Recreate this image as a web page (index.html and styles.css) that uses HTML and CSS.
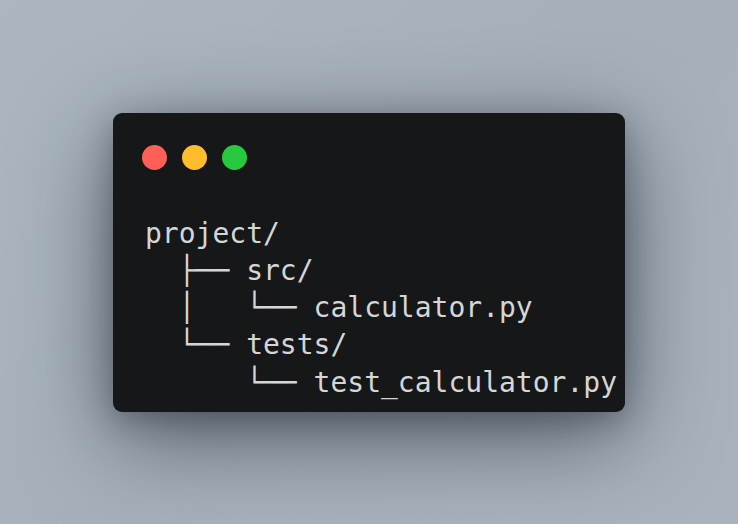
FILE: index.html
```html
<!DOCTYPE html>
<html lang="en">
<head>
<meta charset="utf-8">
<title>Project tree</title>
<link rel="stylesheet" href="styles.css">
</head>
<body>
<main class="stage">
  <section class="window">
    <div class="dots">
      <span class="dot dot-red"></span>
      <span class="dot dot-yellow"></span>
      <span class="dot dot-green"></span>
    </div>
<pre class="tree">project/
  ├── src/
  │   └── calculator.py
  └── tests/
      └── test_calculator.py</pre>
  </section>
</main>
</body>
</html>
```
FILE: styles.css
```css
html, body {
  margin: 0;
  padding: 0;
}
body {
  background: linear-gradient(135deg, #abb6c1 0%, #a6b0bb 50%, #a9b3be 100%);
  min-height: 100vh;
}
.stage {
  width: 738px;
  height: 524px;
  display: flex;
  align-items: center;
  justify-content: center;
}
.window {
  width: 512px;
  height: 299px;
  box-sizing: border-box;
  padding: 32px 0 0 29px;
  background: #151719;
  border-radius: 9px;
  box-shadow: 0 24px 90px rgba(25, 33, 43, 0.6), 0 8px 30px rgba(25, 33, 43, 0.3);
}
.dots {
  display: flex;
  gap: 15px;
  height: 25px;
}
.dot {
  width: 25px;
  height: 25px;
  border-radius: 50%;
}
.dot-red { background: #ff5f56; }
.dot-yellow { background: #ffbd2e; }
.dot-green { background: #27c93f; }
.tree {
  margin: 45px 0 0 3px;
  font-family: "DejaVu Sans Mono", monospace;
  font-size: 28px;
  line-height: 37.25px;
  color: #d6d6d6;
}
```
